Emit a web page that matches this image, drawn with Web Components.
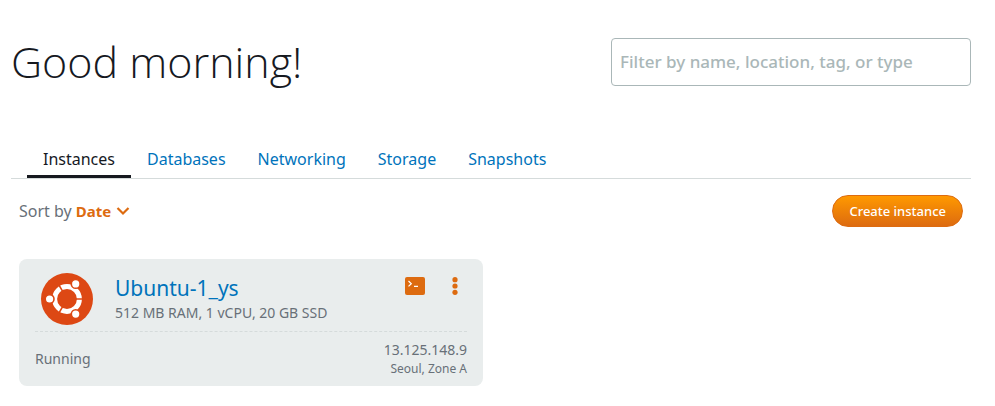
<!DOCTYPE html>
<html lang="en">
<head>
<meta charset="utf-8">
<meta name="viewport" content="width=device-width, initial-scale=1">
<title>Instances</title>
<style>
  body {
    margin: 0;
    background: #fff;
    color: #687078;
    font-family: "Noto Sans", "Open Sans", sans-serif;
    --ink: #16191f;
    --link: #0073bb;
    --accent: #dd6b10;
    --line: #d5dbdb;
    --card: #e9eded;
  }
</style>
</head>
<body>
<console-page>
  <console-header slot="header" label="Filter by name, location, tag, or type">Good morning!</console-header>
  <console-tabs slot="tabs">
    <console-tab current>Instances</console-tab>
    <console-tab>Databases</console-tab>
    <console-tab>Networking</console-tab>
    <console-tab>Storage</console-tab>
    <console-tab>Snapshots</console-tab>
  </console-tabs>
  <sort-button slot="tools" prefix-text="Sort by">Date</sort-button>
  <create-button slot="tools">Create instance</create-button>
  <instance-card>
    <span slot="name">Ubuntu-1_ys</span>
    <span slot="specs">512 MB RAM, 1 vCPU, 20 GB SSD</span>
    <span slot="status">Running</span>
    <span slot="address">13.125.148.9</span>
    <span slot="zone">Seoul, Zone A</span>
  </instance-card>
</console-page>

<script>
  const define = (name, html, setup) => {
    const template = document.createElement("template");
    template.innerHTML = html;
    customElements.define(name, class extends HTMLElement {
      constructor() {
        super();
        this.attachShadow({ mode: "open" }).append(template.content.cloneNode(true));
      }
      connectedCallback() {
        if (setup) setup(this, this.shadowRoot);
      }
    });
  };

  define("console-page", `
    <style>
      :host { display: block; padding: 32px 24px 20px 11px; }
      .tools { display: flex; justify-content: space-between; align-items: center; padding: 16px 8px 32px; }
      .grid { display: grid; grid-template-columns: repeat(2, minmax(0, 1fr)); gap: 16px; padding: 0 8px; }
    </style>
    <slot name="header"></slot>
    <slot name="tabs"></slot>
    <div class="tools"><slot name="tools"></slot></div>
    <main class="grid"><slot></slot></main>
  `);

  define("console-header", `
    <style>
      :host { display: flex; justify-content: space-between; align-items: center; gap: 24px; margin-bottom: 52px; }
      h1 { margin: 0; color: var(--ink); font: 300 43px/60px "Open Sans", "Noto Sans", sans-serif; white-space: nowrap; }
      input {
        box-sizing: border-box; flex: 0 1 360px; min-width: 0; height: 48px; padding: 0 8px 2px;
        border: 1px solid #aab7b8; border-radius: 4px; background: #fff;
        color: var(--ink); font: 500 17px/24px "Noto Sans", sans-serif;
      }
      input::placeholder { color: #aab7b8; opacity: 1; }
    </style>
    <h1><slot></slot></h1>
    <input type="text">
  `, (host, root) => {
    const input = root.querySelector("input");
    input.placeholder = host.getAttribute("label");
    input.setAttribute("aria-label", host.getAttribute("label"));
  });

  define("console-tabs", `
    <style>
      :host { display: block; border-bottom: 1px solid var(--line); padding: 0 16px; }
      nav { display: flex; }
    </style>
    <nav aria-label="Resources"><slot></slot></nav>
  `);

  define("console-tab", `
    <style>
      :host { display: block; }
      a {
        display: block; padding: 0 16px 1px; border-bottom: 3px solid transparent;
        color: var(--link); font-size: 16px; line-height: 30px; text-decoration: none; white-space: nowrap;
      }
      :host([current]) a { color: var(--ink); border-color: var(--ink); }
    </style>
    <a href="#"><slot></slot></a>
  `, (host, root) => {
    if (host.hasAttribute("current")) root.querySelector("a").setAttribute("aria-current", "page");
  });

  define("sort-button", `
    <style>
      :host { display: flex; align-items: center; gap: 4px; font-size: 16px; line-height: 24px; }
      button {
        display: flex; align-items: center; gap: 5px; padding: 0; border: 0; background: none;
        color: var(--accent); font: inherit; font-size: 15px; font-weight: 700; cursor: pointer;
      }
    </style>
    <span id="prefix"></span>
    <button type="button" aria-describedby="prefix"><slot></slot>
      <svg width="14" height="10" viewBox="0 0 14 10" fill="none" stroke="currentColor" stroke-width="2.2" aria-hidden="true"><path d="M1.5 2 7 7.5 12.5 2"/></svg>
    </button>
  `, (host, root) => {
    root.querySelector("span").textContent = host.getAttribute("prefix-text");
  });

  define("create-button", `
    <style>
      :host { display: block; }
      button {
        display: block; padding: 0 16px; border: 1px solid #dd6b10; border-radius: 16px;
        background: linear-gradient(#ff9900, #dd6b10); color: #fff;
        font: 500 13px/30px "Noto Sans", sans-serif; white-space: nowrap; cursor: pointer;
      }
    </style>
    <button type="button"><slot></slot></button>
  `);

  define("ubuntu-logo", `
    <style>:host { display: block; } svg { display: block; }</style>
    <svg width="52" height="52" viewBox="-26 -26 52 52" role="img" aria-label="Ubuntu">
      <circle r="26" fill="#dd4814"/>
      <circle r="12.4" fill="none" stroke="#fff" stroke-width="5"/>
      <g stroke="#dd4814" stroke-width="1.6" fill="#fff">
        <path d="M9 0H16M-4.5 7.8-8 13.9M-4.5-7.8-8-13.9"/>
        <circle cx="-17.4" r="4.4"/><circle cx="8.7" cy="-15.1" r="4.4"/><circle cx="8.7" cy="15.1" r="4.4"/>
      </g>
    </svg>
  `);

  define("instance-card", `
    <style>
      :host { display: block; padding: 12px 16px 8px; border-radius: 8px; background: var(--card); }
      header { display: flex; align-items: flex-start; gap: 22px; padding: 2px 6px 6px 6px; border-bottom: 1px dashed var(--line); }
      .title { flex: 1; min-width: 0; }
      h2 { margin: 0; font-size: 21px; line-height: 30px; font-weight: 400; }
      a { color: var(--link); text-decoration: none; }
      p { margin: 0; font-size: 14px; line-height: 20px; }
      .actions { display: flex; gap: 24px; padding-top: 4px; }
      button { display: block; padding: 0; border: 0; background: none; color: var(--accent); cursor: pointer; }
      svg { display: block; }
      footer { display: flex; justify-content: space-between; align-items: center; padding-top: 8px; font-size: 14px; line-height: 20px; }
      .place { text-align: right; }
      .place .zone { font-size: 12px; line-height: 18px; }
    </style>
    <header>
      <ubuntu-logo></ubuntu-logo>
      <div class="title">
        <h2><a href="#"><slot name="name"></slot></a></h2>
        <p><slot name="specs"></slot></p>
      </div>
      <div class="actions">
        <button type="button" aria-label="Connect">
          <svg width="20" height="18" viewBox="0 0 20 18"><rect width="20" height="18" rx="2" fill="currentColor"/><path d="M3.5 4 6.3 6.7 3.5 9.4M9 9.3h4" fill="none" stroke="#fff" stroke-width="1.2"/></svg>
        </button>
        <button type="button" aria-label="Manage">
          <svg width="12" height="18" viewBox="0 0 12 18" fill="currentColor"><circle cx="6" cy="2.7" r="2.6"/><circle cx="6" cy="9" r="2.6"/><circle cx="6" cy="15.3" r="2.6"/></svg>
        </button>
      </div>
    </header>
    <footer>
      <span><slot name="status"></slot></span>
      <div class="place">
        <div class="address"><slot name="address"></slot></div>
        <div class="zone"><slot name="zone"></slot></div>
      </div>
    </footer>
  `);
</script>
</body>
</html>
